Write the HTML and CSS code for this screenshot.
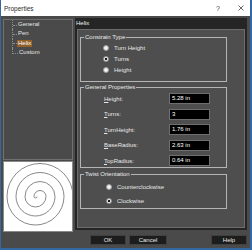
FILE: index.html
```html
<!DOCTYPE html>
<html>
<head>
  <link rel="stylesheet" href="styles.css">
</head>
<body>
  <div class="window">
    <div class="titlebar">
      <span class="title">Properties</span>
      <span class="help-btn">?</span>
      <svg class="close-btn" width="6" height="6" viewBox="0 0 6 6">
        <path d="M0.5 0.5L5.5 5.5M5.5 0.5L0.5 5.5" stroke="#555" stroke-width="0.9" fill="none"/>
      </svg>
    </div>
    <div class="main">
      <div class="sidebar">
        <ul class="tree">
          <li><span>General</span></li>
          <li><span>Pen</span></li>
          <li class="selected"><span>Helix</span></li>
          <li><span>Custom</span></li>
        </ul>
        <div class="preview">
          <svg width="68" height="69" viewBox="1 1 68 69">
            <path d="M34 35.5 A1.5 1.5 0 0 1 31 35.5 A6 6 0 0 1 43 35.5 A10.5 10.5 0 0 1 22 35.5 A15 15 0 0 1 52 35.5 A19.5 19.5 0 0 1 13 35.5 A24 24 0 0 1 61 35.5 A28.5 28.5 0 0 1 4 35.5 A33 33 0 0 1 70 35.5" stroke="#7a7a7a" stroke-width="0.9" fill="none"/>
          </svg>
        </div>
      </div>
      <div class="page">
        <div class="page-head">Helix</div>
        <div class="page-body">
          <fieldset class="group group-constrain">
            <legend>Constrain Type</legend>
            <div class="option"><span class="radio"></span>Turn Height</div>
            <div class="option"><span class="radio checked"></span>Turns</div>
            <div class="option"><span class="radio"></span>Height</div>
          </fieldset>
          <fieldset class="group group-props">
            <legend>General Properties</legend>
            <div class="fields">
              <div class="field-row"><span class="field-label"><u>H</u>eight:</span><span class="field">5.28 in</span></div>
              <div class="field-row"><span class="field-label"><u>T</u>urns:</span><span class="field">3</span></div>
              <div class="field-row"><span class="field-label"><u>T</u>urnHeight:</span><span class="field">1.76 in</span></div>
              <div class="field-row"><span class="field-label"><u>B</u>aseRadius:</span><span class="field">2.63 in</span></div>
              <div class="field-row"><span class="field-label"><u>T</u>opRadius:</span><span class="field">0.64 in</span></div>
            </div>
          </fieldset>
          <fieldset class="group group-twist">
            <legend>Twist Orientation</legend>
            <div class="option"><span class="radio"></span>Counterclockwise</div>
            <div class="option"><span class="radio checked"></span>Clockwise</div>
          </fieldset>
        </div>
      </div>
    </div>
    <div class="footer">
      <button class="btn btn-ok">OK</button>
      <button class="btn btn-cancel">Cancel</button>
      <button class="btn btn-help">Help</button>
    </div>
  </div>
</body>
</html>
```

FILE: styles.css
```css
* {
  margin: 0;
  padding: 0;
  box-sizing: border-box;
}
body {
  width: 252px;
  height: 250px;
  overflow: hidden;
  font-family: "Liberation Sans", Arial, sans-serif;
  font-size: 6px;
  color: #e6e6e6;
}
.window {
  width: 252px;
  height: 250px;
  display: flex;
  flex-direction: column;
  background: #4a4a4a;
  border: solid #3568a0;
  border-width: 0 2px 2px 1px;
}
.titlebar {
  height: 16px;
  flex: none;
  display: flex;
  align-items: center;
  background: #fff;
  color: #2b2b2b;
  padding: 0 6px 0 3px;
}
.title {
  font-size: 6.5px;
}
.help-btn {
  margin-left: auto;
  margin-right: 18px;
  font-size: 7px;
  color: #444;
}
.close-btn {
  display: block;
}
.main {
  height: 216px;
  flex: none;
  display: flex;
  align-items: flex-start;
  padding: 2px 0 0 2px;
}
.sidebar {
  width: 70px;
  margin-top: 1px;
  display: flex;
  flex-direction: column;
  gap: 1px;
}
.tree {
  height: 141px;
  border: 1px solid #707070;
  list-style: none;
  padding-left: 8px;
}
.tree li {
  height: 9.3px;
  display: flex;
  align-items: center;
}
.tree li:not(:last-child) {
  border-left: 1px dotted #8c8c8c;
}
.tree li::before {
  content: "";
  width: 4px;
  height: 50%;
  align-self: flex-start;
  border-bottom: 1px dotted #8c8c8c;
}
.tree li:last-child::before {
  width: 5px;
  border-left: 1px dotted #8c8c8c;
}
.tree span {
  padding: 0 1px;
  line-height: 7px;
}
.tree .selected span {
  background: #93602a;
  color: #fff;
}
.preview {
  height: 71px;
  background: #fff;
  border: 1px solid #8a8a8a;
}
.preview svg {
  display: block;
}
.page {
  width: 172px;
  height: 212px;
  margin-left: 2px;
  display: flex;
  flex-direction: column;
  background: #252525;
  padding: 0 2px 2px;
}
.page-head {
  height: 11px;
  line-height: 11px;
  margin-left: -1px;
  color: #f0f0f0;
}
.page-body {
  flex: 1;
  border: 1px solid #6c6c6c;
  background: #4e4e4e;
  padding-left: 2px;
}
.group {
  width: 147px;
  min-width: 0;
  margin: 0;
  padding: 0;
  border: 1px solid #b5b5b5;
}
.group legend {
  margin-left: 3px;
  padding: 0 1px;
  line-height: 8px;
  font-size: 6px;
  color: #eaeaea;
}
.group-constrain {
  margin-top: 3px;
  padding: 1px 0 6px;
}
.option {
  display: flex;
  align-items: center;
  height: 11px;
  padding-left: 22px;
}
.radio {
  width: 6px;
  height: 6px;
  flex: none;
  margin-right: 5px;
  border-radius: 50%;
  background: #f2f2f2;
  border: 1px solid #9a9a9a;
}
.radio.checked {
  background: radial-gradient(circle, #1a1a1a 0 1.1px, #f2f2f2 1.6px);
}
.group-props {
  margin-top: 1px;
  padding: 2px 0 1px;
}
.fields {
  display: flex;
  flex-direction: column;
  gap: 4.5px;
}
.field-row {
  display: flex;
  align-items: center;
  height: 11px;
  padding-left: 23px;
}
.field-label {
  width: 65px;
}
.field {
  width: 41px;
  height: 11px;
  line-height: 9px;
  padding-left: 2px;
  background: #000;
  border: 1px solid #6e6e6e;
  color: #fff;
}
.group-twist {
  margin-top: 2px;
  padding: 3.5px 0 1.5px;
}
.group-twist .option {
  padding-left: 25px;
}
.group-twist .option + .option {
  margin-top: 3px;
}
.footer {
  display: flex;
  gap: 3px;
  padding: 3px 3px 0 89px;
}
.btn {
  height: 10px;
  background: #1d1d1d;
  border: 1px solid #404040;
  color: #e8e8e8;
  font: 6px "Liberation Sans", Arial, sans-serif;
}
.btn-ok {
  width: 36px;
}
.btn-cancel {
  width: 38px;
}
.btn-help {
  width: 36px;
  margin-left: auto;
}
```
